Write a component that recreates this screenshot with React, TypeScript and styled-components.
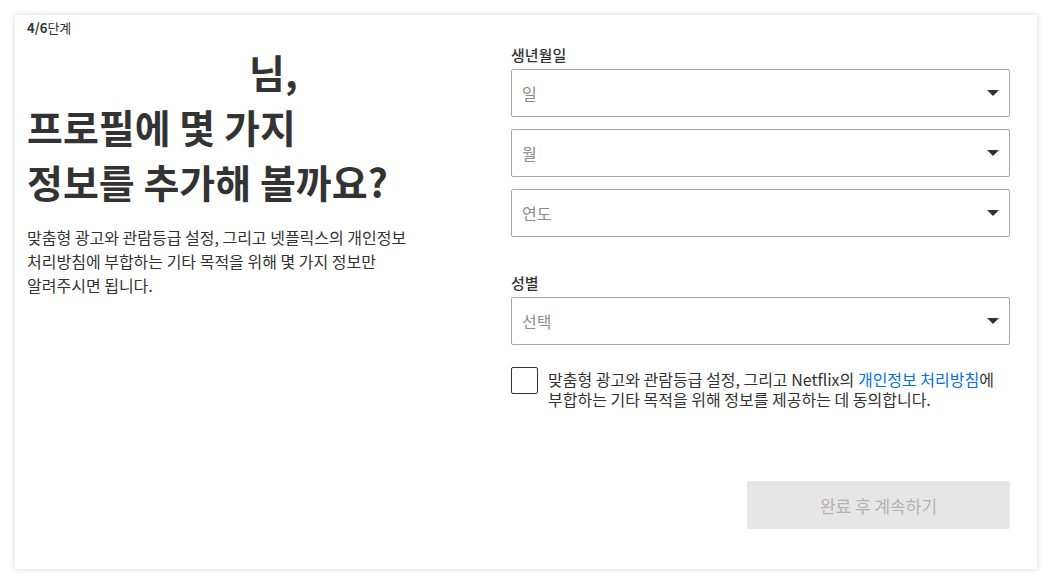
import React from "react";
import styled, { createGlobalStyle } from "styled-components";

const GlobalStyle = createGlobalStyle`
  html, body {
    margin: 0;
    padding: 0;
    background: #fff;
    font-family: "Noto Sans CJK KR", "Noto Sans", "Liberation Sans", sans-serif;
    color: #333;
  }
  * { box-sizing: border-box; }
`;

const Page = styled.div`
  width: 1052px;
  height: 584px;
  padding: 15px;
`;

const Card = styled.div`
  width: 1022px;
  height: 554px;
  background: #fff;
  box-shadow: 0 0 6px rgba(0, 0, 0, 0.16);
  padding: 4px 27px 40px 12px;
  display: flex;
  flex-direction: column;
`;

const StepLabel = styled.div`
  font-size: 13px;
  line-height: 18px;
  color: #333;
  b {
    font-weight: 700;
  }
`;

const Columns = styled.div`
  flex: 1;
  display: flex;
  gap: 41px;
`;

const Left = styled.div`
  width: 443px;
  padding-top: 7px;
`;

const Heading = styled.h1`
  margin: 0;
  font-size: 39px;
  font-weight: 700;
  line-height: 55px;
  color: #333;
`;

const Redacted = styled.span`
  display: inline-block;
  width: 222px;
`;

const Description = styled.p`
  margin: 16px 0 0;
  font-size: 16px;
  line-height: 24px;
  color: #333;
  max-width: 390px;
  word-break: keep-all;
`;

const Right = styled.div`
  flex: 1;
  display: flex;
  flex-direction: column;
  padding-top: 8px;
`;

const FieldLabel = styled.div<{ $top?: number }>`
  font-size: 15px;
  font-weight: 500;
  line-height: 20px;
  margin-top: ${(p) => p.$top ?? 0}px;
  margin-bottom: 4px;
  color: #333;
`;

const SelectBox = styled.div<{ $gap?: number }>`
  height: 48px;
  border: 1px solid #a6a6a6;
  border-radius: 2px;
  display: flex;
  align-items: center;
  justify-content: space-between;
  padding: 0 10px;
  margin-bottom: ${(p) => p.$gap ?? 0}px;
  font-size: 16px;
  color: #8c8c8c;
`;

const Arrow = styled.span`
  width: 0;
  height: 0;
  border-left: 6px solid transparent;
  border-right: 6px solid transparent;
  border-top: 6px solid #333;
`;

const Consent = styled.label`
  display: flex;
  gap: 10px;
  margin-top: 22px;
  font-size: 16px;
  line-height: 20px;
  color: #333;
`;

const Checkbox = styled.span`
  flex: none;
  width: 27px;
  height: 27px;
  border: 1px solid #333;
  border-radius: 2px;
`;

const ConsentText = styled.span`
  padding-top: 2px;
  display: flex;
  flex-direction: column;
`;

const ConsentLine = styled.span`
  display: block;
  height: 20px;
  a {
    display: inline-block;
    color: #0071eb;
    text-decoration: none;
  }
`;

const Footer = styled.div`
  margin-top: auto;
  display: flex;
  justify-content: flex-end;
`;

const SubmitButton = styled.button`
  width: 263px;
  height: 48px;
  border: none;
  border-radius: 2px;
  background: #e6e6e6;
  color: #b3b3b3;
  font-family: inherit;
  font-size: 17px;
`;

export default function App() {
  return (
    <Page>
      <GlobalStyle />
      <Card>
        <StepLabel>
          <b>4/6</b>단계
        </StepLabel>
        <Columns>
          <Left>
            <Heading>
              <Redacted />님,
              <br />
              프로필에 몇 가지
              <br />
              정보를 추가해 볼까요?
            </Heading>
            <Description>
              맞춤형 광고와 관람등급 설정, 그리고 넷플릭스의 개인정보
              처리방침에 부합하는 기타 목적을 위해 몇 가지 정보만 알려주시면
              됩니다.
            </Description>
          </Left>
          <Right>
            <FieldLabel>생년월일</FieldLabel>
            <SelectBox $gap={12}>
              일<Arrow />
            </SelectBox>
            <SelectBox $gap={12}>
              월<Arrow />
            </SelectBox>
            <SelectBox>
              연도<Arrow />
            </SelectBox>
            <FieldLabel $top={36}>성별</FieldLabel>
            <SelectBox>
              선택<Arrow />
            </SelectBox>
            <Consent>
              <Checkbox />
              <ConsentText>
                <ConsentLine>
                  맞춤형 광고와 관람등급 설정, 그리고 Netflix의{" "}
                  <a href="#">개인정보 처리방침</a>에
                </ConsentLine>
                <ConsentLine>
                  부합하는 기타 목적을 위해 정보를 제공하는 데 동의합니다.
                </ConsentLine>
              </ConsentText>
            </Consent>
            <Footer>
              <SubmitButton>완료 후 계속하기</SubmitButton>
            </Footer>
          </Right>
        </Columns>
      </Card>
    </Page>
  );
}
